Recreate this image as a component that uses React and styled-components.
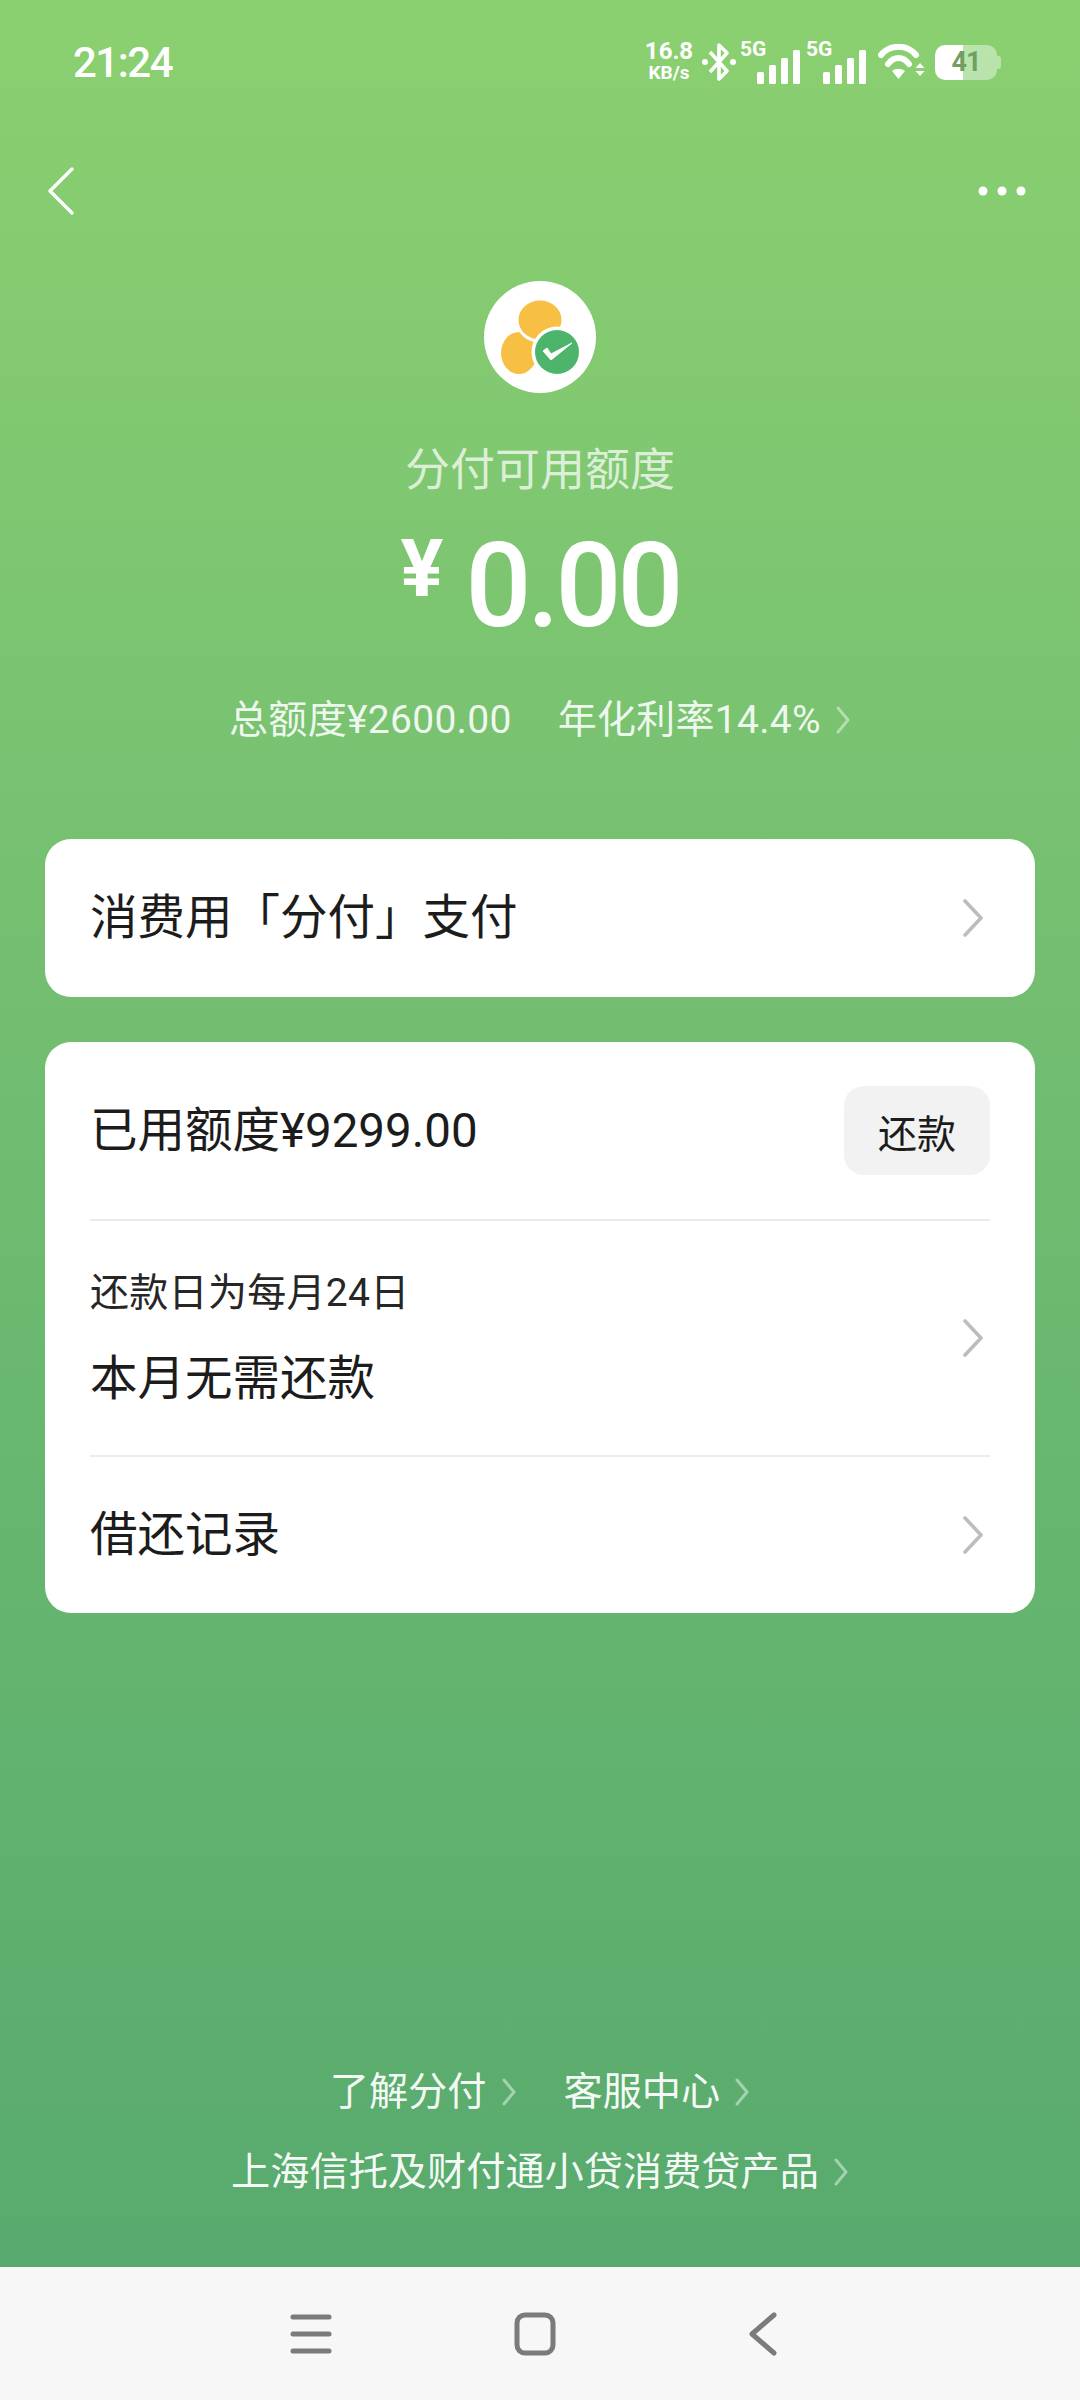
import React from "react";
import styled, { createGlobalStyle } from "styled-components";

const GlobalStyle = createGlobalStyle`
  html, body {
    margin: 0;
    padding: 0;
    background: #f7f7f7;
  }
  * {
    box-sizing: border-box;
  }
  body {
    font-family: Roboto, "Noto Sans CJK SC", sans-serif;
  }
`;

const Screen = styled.div`
  width: 1080px;
  height: 2400px;
  display: flex;
  flex-direction: column;
  overflow: hidden;
`;

const Main = styled.div`
  flex: 1;
  display: flex;
  flex-direction: column;
  background: linear-gradient(180deg, #8bd070 0%, #76c071 38%, #65b56f 70%, #58aa6e 100%);
`;

const StatusBar = styled.div`
  height: 124px;
  padding: 0 83px 0 73px;
  display: flex;
  align-items: center;
  justify-content: space-between;
  color: #fff;
`;

const Time = styled.div`
  font-size: 42px;
  font-weight: 500;
  letter-spacing: -1.5px;
`;

const StatusIcons = styled.div`
  display: flex;
  align-items: center;
  height: 44px;
`;

const Speed = styled.div`
  display: flex;
  flex-direction: column;
  align-items: center;
  width: 48px;
  font-weight: 700;
  line-height: 21px;

  b {
    font-size: 24px;
    font-weight: 700;
  }
  span {
    font-size: 19px;
  }
`;

const Bluetooth = styled.svg`
  width: 36px;
  height: 42px;
  margin-left: 8px;
`;

const Signal = styled.div`
  position: relative;
  width: 60px;
  height: 44px;
  margin-left: ${({ $gap }) => $gap}px;

  svg {
    position: absolute;
    right: 0;
    bottom: 0;
  }
`;

const SignalTag = styled.span`
  position: absolute;
  left: 0;
  top: -2px;
  font-size: 21px;
  font-weight: 700;
  line-height: 22px;
`;

const Wifi = styled.svg`
  width: 48px;
  height: 36px;
  margin-left: 12px;
`;

const Battery = styled.div`
  position: relative;
  width: 62px;
  height: 35px;
  margin-left: 9px;
  border-radius: 10px;
  background: linear-gradient(90deg, #fff 0 45%, rgba(255, 255, 255, 0.42) 45% 100%);
  display: flex;
  align-items: center;
  justify-content: center;
  color: #6f9f62;
  font-size: 27px;
  font-weight: 700;
  letter-spacing: -1px;

  &::after {
    content: "";
    position: absolute;
    right: -4px;
    top: 11px;
    width: 4px;
    height: 13px;
    border-radius: 0 3px 3px 0;
    background: rgba(255, 255, 255, 0.42);
  }
`;

const TopBar = styled.div`
  height: 134px;
  padding: 0 54px 0 48px;
  display: flex;
  align-items: center;
  justify-content: space-between;
`;

const Hero = styled.div`
  display: flex;
  flex-direction: column;
  align-items: center;
  margin-top: 23px;
`;

const Logo = styled.svg`
  width: 112px;
  height: 112px;
`;

const CreditLabel = styled.div`
  margin-top: 44px;
  font-size: 45px;
  line-height: 60px;
  color: rgba(255, 255, 255, 0.72);
  font-family: "Noto Sans CJK SC", sans-serif;
  font-weight: 400;
`;

const Amount = styled.div`
  margin-top: 24px;
  display: flex;
  align-items: flex-start;
  color: #fff;
  font-family: Roboto, sans-serif;
  font-weight: 500;
  height: 130px;
`;

const Yen = styled.span`
  font-size: 80px;
  line-height: 96px;
  font-weight: 700;
  margin-right: 22px;
`;

const Digits = styled.span`
  font-size: 116px;
  line-height: 130px;
  letter-spacing: -4px;
`;

const Summary = styled.div`
  margin-top: 41px;
  display: flex;
  align-items: center;
  color: rgba(255, 255, 255, 0.9);
  font-size: 39px;
  line-height: 56px;
  font-weight: 400;
  letter-spacing: 0.3px;
`;

const SummaryItem = styled.span`
  margin-left: ${({ $gap }) => $gap || 0}px;
`;

const SmallChevron = styled.svg`
  width: 16px;
  height: 28px;
  margin-left: 14px;
  flex: none;
`;

const Cards = styled.div`
  margin-top: 91px;
  padding: 0 45px;
  display: flex;
  flex-direction: column;
  gap: 45px;
`;

const Card = styled.div`
  background: #fff;
  border-radius: 26px;
  padding: 0 45px 0 45px;
`;

const Row = styled.div`
  height: ${({ $h }) => $h}px;
  display: flex;
  align-items: center;
  justify-content: space-between;
  border-top: ${({ $line }) => ($line ? "2px solid #ebebeb" : "none")};
`;

const RowTitle = styled.div`
  font-size: 47.5px;
  line-height: 64px;
  color: #1c1c1c;
  font-weight: 400;
`;

const RowStack = styled.div`
  display: flex;
  flex-direction: column;
  gap: 26px;
`;

const RowHint = styled.div`
  font-size: 39px;
  line-height: 56px;
  color: #262626;
  letter-spacing: 0.3px;
`;

const RepayButton = styled.button`
  width: 146px;
  height: 89px;
  border: 0;
  border-radius: 20px;
  background: #f2f2f2;
  color: #1c1c1c;
  font-family: inherit;
  font-size: 39px;
`;

const RowChevron = styled.svg`
  width: 22px;
  height: 38px;
  margin-right: 6px;
`;

const Links = styled.div`
  margin-top: auto;
  padding-bottom: 67px;
  display: flex;
  flex-direction: column;
  align-items: center;
  gap: 24px;
  color: rgba(255, 255, 255, 0.96);
  font-size: 39.2px;
  line-height: 56px;
`;

const LinkRow = styled.div`
  display: flex;
  align-items: center;
  gap: 47px;
`;

const LinkItem = styled.span`
  display: flex;
  align-items: center;
`;

const NavBar = styled.div`
  height: 133px;
  background: #f7f7f7;
  display: flex;
  align-items: center;
  justify-content: center;
`;

const NavIcon = styled.svg`
  width: 44px;
  height: 44px;
  margin-left: ${({ $gap }) => $gap || 0}px;
`;

const Chevron = ({ as: Comp = SmallChevron, w = 16, h = 28, sw = 3, ...rest }) => (
  <Comp viewBox={`0 0 ${w} ${h}`} {...rest}>
    <polyline
      points={`3,2 ${w - 3},${h / 2} 3,${h - 2}`}
      fill="none"
      stroke="currentColor"
      strokeWidth={sw}
      strokeLinecap="round"
      strokeLinejoin="round"
    />
  </Comp>
);

const SoftChevron = () => <Chevron style={{ color: "rgba(255,255,255,0.45)" }} />;
const CardChevron = () => (
  <Chevron as={RowChevron} w={22} h={38} sw={3.6} style={{ color: "#bdbdbd" }} />
);

const Bars = () => (
  <svg width="44" height="34" viewBox="0 0 44 34" fill="#fff">
    <rect x="1" y="22" width="7" height="12" rx="1.5" />
    <rect x="13" y="15" width="7" height="19" rx="1.5" />
    <rect x="25" y="8" width="7" height="26" rx="1.5" />
    <rect x="37" y="0" width="7" height="34" rx="1.5" />
  </svg>
);

export default function App() {
  return (
    <Screen>
      <GlobalStyle />
      <Main>
        <StatusBar>
          <Time>21:24</Time>
          <StatusIcons>
            <Speed>
              <b>16.8</b>
              <span>KB/s</span>
            </Speed>
            <Bluetooth viewBox="0 0 36 42">
              <polyline
                points="9,11 26,30 18,38 18,4 26,12 9,31"
                fill="none"
                stroke="#fff"
                strokeWidth="3.6"
                strokeLinejoin="round"
              />
              <circle cx="4" cy="21" r="3" fill="#fff" />
              <circle cx="32" cy="21" r="3" fill="#fff" />
            </Bluetooth>
            <Signal $gap={3}>
              <SignalTag>5G</SignalTag>
              <Bars />
            </Signal>
            <Signal $gap={6}>
              <SignalTag>5G</SignalTag>
              <Bars />
            </Signal>
            <Wifi viewBox="0 0 48 36" fill="none" stroke="#fff" strokeLinecap="round">
              <path d="M3 11 C 12 0, 29 0, 38 11" strokeWidth="6" />
              <path d="M10 20 C 16 12, 25 12, 31 20" strokeWidth="6" />
              <path d="M14 27 L20.5 35 L27 27 C 23 24, 18 24, 14 27 Z" fill="#fff" stroke="none" />
              <path d="M42 19 L46.5 24 L37.5 24 Z M37.5 27 L46.5 27 L42 32 Z" fill="#fff" stroke="none" />
            </Wifi>
            <Battery>41</Battery>
          </StatusIcons>
        </StatusBar>

        <TopBar>
          <svg width="26" height="48" viewBox="0 0 26 48">
            <polyline
              points="24,2 2,24 24,46"
              fill="none"
              stroke="#fff"
              strokeWidth="3.4"
              strokeLinecap="round"
              strokeLinejoin="round"
            />
          </svg>
          <svg width="48" height="10" viewBox="0 0 48 10" fill="#fff">
            <circle cx="5" cy="5" r="4.5" />
            <circle cx="24" cy="5" r="4.5" />
            <circle cx="43" cy="5" r="4.5" />
          </svg>
        </TopBar>

        <Hero>
          <Logo viewBox="0 0 112 112">
            <circle cx="56" cy="56" r="56" fill="#fff" />
            <ellipse cx="35" cy="72" rx="18" ry="21" fill="#f7c044" />
            <ellipse cx="56" cy="39" rx="23" ry="21" fill="#f7c044" stroke="#fff" strokeWidth="3" />
            <circle cx="73" cy="71" r="25.5" fill="#fff" />
            <circle cx="73" cy="71" r="22" fill="#4cb56b" />
            <path d="M59 70 L67 79 L88 62 L67 73 L63 67 Z" fill="#fff" stroke="#fff" strokeWidth="1" strokeLinejoin="round" />
          </Logo>
          <CreditLabel>分付可用额度</CreditLabel>
          <Amount>
            <Yen>¥</Yen>
            <Digits>0.00</Digits>
          </Amount>
          <Summary>
            <SummaryItem>总额度¥2600.00</SummaryItem>
            <SummaryItem $gap={46}>年化利率14.4%</SummaryItem>
            <SoftChevron />
          </Summary>
        </Hero>

        <Cards>
          <Card>
            <Row $h={158}>
              <RowTitle>消费用「分付」支付</RowTitle>
              <CardChevron />
            </Row>
          </Card>
          <Card>
            <Row $h={177}>
              <RowTitle>已用额度¥9299.00</RowTitle>
              <RepayButton>还款</RepayButton>
            </Row>
            <Row $h={236} $line>
              <RowStack>
                <RowHint>还款日为每月24日</RowHint>
                <RowTitle>本月无需还款</RowTitle>
              </RowStack>
              <CardChevron />
            </Row>
            <Row $h={158} $line>
              <RowTitle>借还记录</RowTitle>
              <CardChevron />
            </Row>
          </Card>
        </Cards>

        <Links>
          <LinkRow>
            <LinkItem>
              了解分付
              <SoftChevron />
            </LinkItem>
            <LinkItem>
              客服中心
              <SoftChevron />
            </LinkItem>
          </LinkRow>
          <LinkItem>
            上海信托及财付通小贷消费贷产品
            <SoftChevron />
          </LinkItem>
        </Links>
      </Main>

      <NavBar>
        <NavIcon viewBox="0 0 44 44" stroke="#7b7b7b" fill="none" strokeWidth="5" strokeLinecap="round">
          <path d="M4 5 H40 M4 22 H40 M4 39 H40" />
        </NavIcon>
        <NavIcon $gap={180} viewBox="0 0 44 44" stroke="#7b7b7b" fill="none" strokeWidth="5">
          <rect x="4" y="3" width="36" height="38" rx="8" />
        </NavIcon>
        <NavIcon $gap={190} viewBox="0 0 44 44" stroke="#7b7b7b" fill="none" strokeWidth="5" strokeLinecap="round" strokeLinejoin="round">
          <polyline points="27,3 5,22 27,41" />
        </NavIcon>
      </NavBar>
    </Screen>
  );
}
